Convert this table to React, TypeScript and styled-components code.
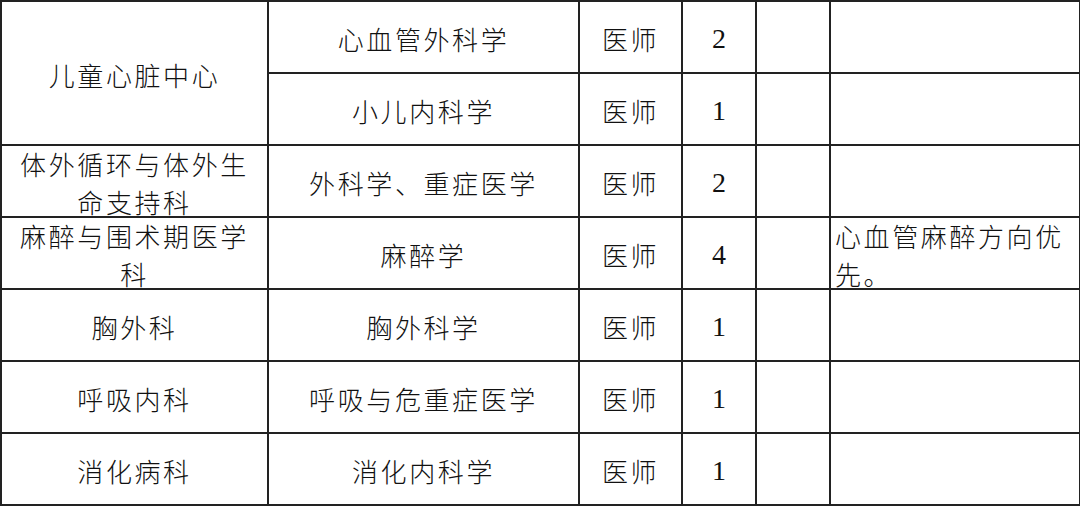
import styled, { createGlobalStyle } from "styled-components";

const Global = createGlobalStyle`
  html, body {
    margin: 0;
    padding: 0;
    background: #ffffff;
  }
`;

const Sheet = styled.table`
  border-collapse: collapse;
  table-layout: fixed;
  width: 1079px;
  font-family: "Noto Sans CJK SC", "Noto Sans", sans-serif;
  font-weight: 300;
  color: #111;
`;

const Col = styled.col<{ $w: number }>`
  width: ${(p) => p.$w}px;
`;

const Row = styled.tr`
  height: 72px;
`;

const Cell = styled.td`
  border: 2px solid #222;
  padding: 0;
  vertical-align: middle;
`;

const Box = styled.div<{ $align?: "left" | "center" }>`
  box-sizing: border-box;
  height: 70px;
  display: flex;
  align-items: center;
  justify-content: ${(p) => (p.$align === "left" ? "flex-start" : "center")};
  padding: 3px ${(p) => (p.$align === "left" ? "4px" : "8px")} 0;
  text-align: ${(p) => p.$align || "center"};
  font-size: 26px;
  letter-spacing: 2.6px;
  line-height: 38px;
  overflow: visible;
`;

const Num = styled.span`
  font-family: "Liberation Serif", "Times New Roman", serif;
  font-weight: 400;
  font-size: 28px;
  letter-spacing: 0;
`;

type Item = {
  dept?: string;
  span?: number;
  major: string;
  role: string;
  count: number;
  note?: string;
};

const rows: Item[] = [
  { dept: "儿童心脏中心", span: 2, major: "心血管外科学", role: "医师", count: 2 },
  { major: "小儿内科学", role: "医师", count: 1 },
  { dept: "体外循环与体外生命支持科", major: "外科学、重症医学", role: "医师", count: 2 },
  { dept: "麻醉与围术期医学科", major: "麻醉学", role: "医师", count: 4, note: "心血管麻醉方向优先。" },
  { dept: "胸外科", major: "胸外科学", role: "医师", count: 1 },
  { dept: "呼吸内科", major: "呼吸与危重症医学", role: "医师", count: 1 },
  { dept: "消化病科", major: "消化内科学", role: "医师", count: 1 },
];

const widths = [267, 311, 103, 74, 74, 250];

export default function App() {
  return (
    <>
      <Global />
      <Sheet>
        <colgroup>
          {widths.map((w, i) => (
            <Col key={i} $w={w} />
          ))}
        </colgroup>
        <tbody>
          {rows.map((r, i) => (
            <Row key={i}>
              {r.dept && (
                <Cell rowSpan={r.span || 1}>
                  <Box>{r.dept}</Box>
                </Cell>
              )}
              <Cell>
                <Box>{r.major}</Box>
              </Cell>
              <Cell>
                <Box>{r.role}</Box>
              </Cell>
              <Cell>
                <Box>
                  <Num>{r.count}</Num>
                </Box>
              </Cell>
              <Cell>
                <Box />
              </Cell>
              <Cell>
                <Box $align="left">{r.note}</Box>
              </Cell>
            </Row>
          ))}
        </tbody>
      </Sheet>
    </>
  );
}
